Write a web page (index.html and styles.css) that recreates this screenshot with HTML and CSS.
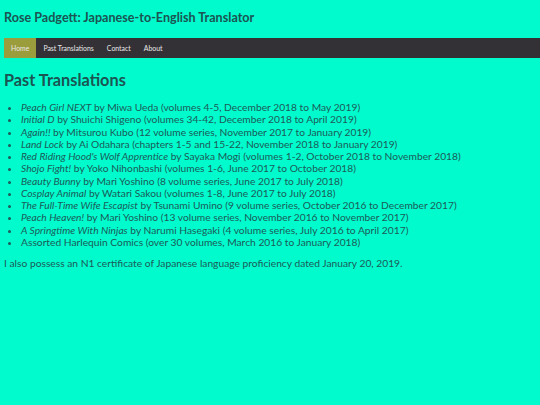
FILE: index.html
```html
<!DOCTYPE html>
<html>
<head>
<meta charset="utf-8">
<title>Past Translations</title>
<link rel="stylesheet" href="styles.css">
</head>
<body>
<header class="site-header">
  <h1 class="site-title">Rose Padgett: Japanese-to-English Translator</h1>
</header>
<nav class="nav">
  <a class="nav-link active" href="#">Home</a>
  <a class="nav-link" href="#">Past Translations</a>
  <a class="nav-link" href="#">Contact</a>
  <a class="nav-link" href="#">About</a>
</nav>
<main class="content">
  <h2 class="page-title">Past Translations</h2>
  <ul class="works">
    <li><i>Peach Girl NEXT</i> by Miwa Ueda (volumes 4-5, December 2018 to May 2019)</li>
    <li><i>Initial D</i> by Shuichi Shigeno (volumes 34-42, December 2018 to April 2019)</li>
    <li><i>Again!!</i> by Mitsurou Kubo (12 volume series, November 2017 to January 2019)</li>
    <li><i>Land Lock</i> by Ai Odahara (chapters 1-5 and 15-22, November 2018 to January 2019)</li>
    <li><i>Red Riding Hood's Wolf Apprentice</i> by Sayaka Mogi (volumes 1-2, October 2018 to November 2018)</li>
    <li><i>Shojo Fight!</i> by Yoko Nihonbashi (volumes 1-6, June 2017 to October 2018)</li>
    <li><i>Beauty Bunny</i> by Mari Yoshino (8 volume series, June 2017 to July 2018)</li>
    <li><i>Cosplay Animal</i> by Watari Sakou (volumes 1-8, June 2017 to July 2018)</li>
    <li><i>The Full-Time Wife Escapist</i> by Tsunami Umino (9 volume series, October 2016 to December 2017)</li>
    <li><i>Peach Heaven!</i> by Mari Yoshino (13 volume series, November 2016 to November 2017)</li>
    <li><i>A Springtime With Ninjas</i> by Narumi Hasegaki (4 volume series, July 2016 to April 2017)</li>
    <li>Assorted Harlequin Comics (over 30 volumes, March 2016 to January 2018)</li>
  </ul>
  <p class="note">I also possess an N1 certificate of Japanese language proficiency dated January 20, 2019.</p>
</main>
</body>
</html>
```
FILE: styles.css
```css
html, body {
  background: #02fbcd;
}
body {
  margin: 0;
  padding: 0 0 0 4px;
  font-family: Lato, "Open Sans", sans-serif;
  color: #1d5a58;
}
.site-header {
  padding: 10px 0 0 0;
  height: 28px;
}
.site-title {
  margin: 0;
  font-size: 12.6px;
  font-weight: bold;
  color: #1b5452;
  line-height: 16px;
}
.nav {
  display: flex;
  background: #333135;
  height: 20px;
  align-items: stretch;
}
.nav-link {
  display: flex;
  align-items: center;
  padding: 0 6.5px;
  font-size: 6.9px;
  color: #e8e8e8;
  text-decoration: none;
}
.nav-link.active {
  background: #9b9c3c;
  padding: 0 7px;
  margin-right: 0.5px;
}
.content {
  padding: 0;
}
.page-title {
  margin: 12px 0 0 0;
  font-size: 16.3px;
  line-height: 20px;
  font-weight: bold;
  color: #1b5452;
}
.works {
  margin: 11px 0 0 0;
  padding: 0 0 0 17px;
  font-size: 10.25px;
  line-height: 12.25px;
}
.works li {
  margin: 0;
}
.note {
  margin: 9px 0 0 0;
  font-size: 10.25px;
  line-height: 12px;
}
```
